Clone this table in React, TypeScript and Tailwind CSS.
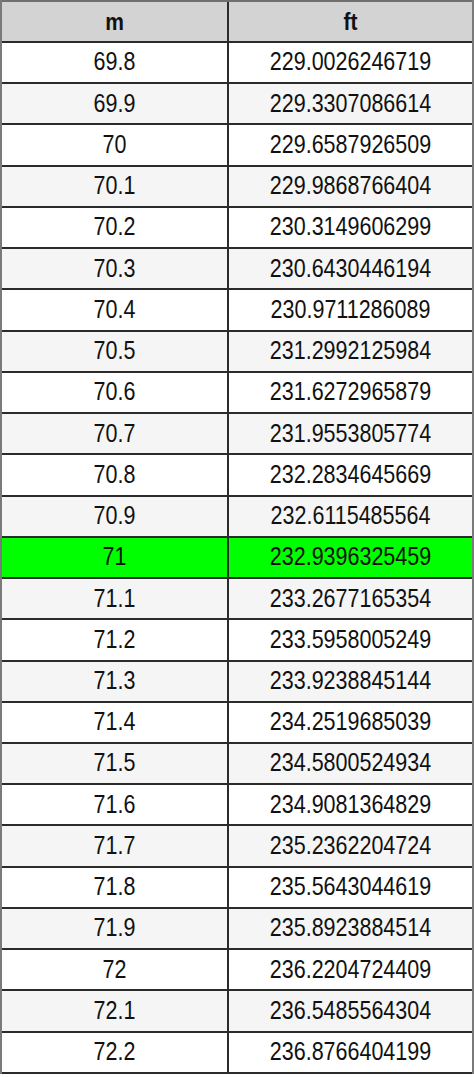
const rows: [string, string][] = [
  ["69.8", "229.0026246719"],
  ["69.9", "229.3307086614"],
  ["70", "229.6587926509"],
  ["70.1", "229.9868766404"],
  ["70.2", "230.3149606299"],
  ["70.3", "230.6430446194"],
  ["70.4", "230.9711286089"],
  ["70.5", "231.2992125984"],
  ["70.6", "231.6272965879"],
  ["70.7", "231.9553805774"],
  ["70.8", "232.2834645669"],
  ["70.9", "232.6115485564"],
  ["71", "232.9396325459"],
  ["71.1", "233.2677165354"],
  ["71.2", "233.5958005249"],
  ["71.3", "233.9238845144"],
  ["71.4", "234.2519685039"],
  ["71.5", "234.5800524934"],
  ["71.6", "234.9081364829"],
  ["71.7", "235.2362204724"],
  ["71.8", "235.5643044619"],
  ["71.9", "235.8923884514"],
  ["72", "236.2204724409"],
  ["72.1", "236.5485564304"],
  ["72.2", "236.8766404199"],
];

// source image is slightly stretched vertically, so glyphs get a small y-scale
const Cell = ({ children }: { children: string }) => (
  <span className="inline-block scale-y-[1.16]">{children}</span>
);

export default function App() {
  return (
    <div className="w-[474px] bg-white font-['Liberation_Sans',Arial,sans-serif] text-[#111]">
      <div className="border-x-2 border-[#7a7a7a]">
        {/* header */}
        <div className="flex h-[43px] bg-[#d3d3d3] border-t-2 border-t-[#6f6f6f] border-b-2 border-b-[#2b2b2b] text-[21px] font-bold">
          <div className="w-[227px] flex items-center justify-center border-r-2 border-[#2b2b2b]">
            <Cell>m</Cell>
          </div>
          <div className="flex-1 flex items-center justify-center">
            <Cell>ft</Cell>
          </div>
        </div>
        {rows.map(([m, ft], i) => {
          const bg = m === "71" ? "bg-[#00ff00]" : i % 2 === 1 ? "bg-[#f5f5f5]" : "bg-white";
          return (
            <div key={m} className={`flex h-[41.24px] border-b-2 border-[#2b2b2b] text-[21.5px] ${bg}`}>
              <div className="w-[227px] flex items-center justify-center border-r-2 border-[#2b2b2b]">
                <Cell>{m}</Cell>
              </div>
              <div className="flex-1 flex items-center justify-center">
                <Cell>{ft}</Cell>
              </div>
            </div>
          );
        })}
      </div>
    </div>
  );
}
